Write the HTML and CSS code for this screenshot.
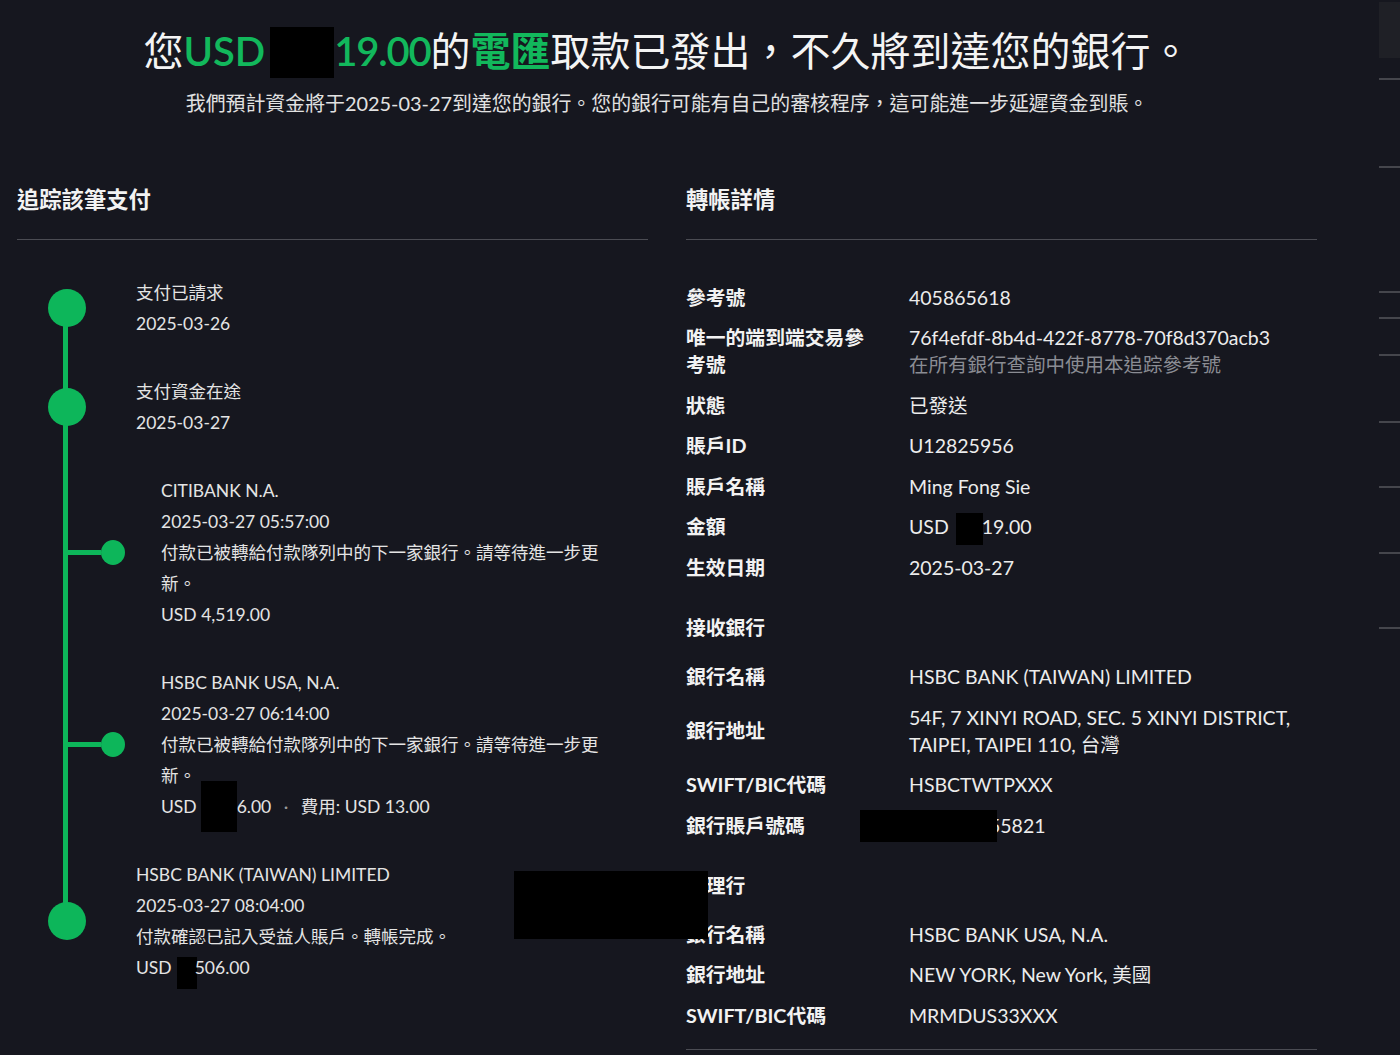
FILE: index.html
```html
<!DOCTYPE html>
<html lang="zh-Hant-TW">
<head>
  <meta charset="UTF-8" />
  <meta name="viewport" content="width=device-width, initial-scale=1.0">
  <title>電匯取款已發出</title>
  <link rel="stylesheet" href="styles.css">
</head>
<body>

  <div class="page">
    <!-- Summary -->
    <div class="hero">
      <h1>您<span class="green">USD<span class="mask mask-hero"></span><span class="num">19.00</span></span>的<span class="green strong">電匯</span>取款已發出，不久將到達您的銀行。</h1>
      <p>我們預計資金將于2025-03-27到達您的銀行。您的銀行可能有自己的審核程序，這可能進一步延遲資金到賬。</p>
    </div>

    <div class="columns">
      <!-- Tracking timeline -->
      <section class="panel">
        <h2>追踪該筆支付</h2>
        <div class="timeline">
          <div class="event">
            <div class="marker"><span class="dot"></span></div>
            <div class="event-text">
              <div>支付已請求</div>
              <div>2025-03-26</div>
            </div>
          </div>
          <div class="event">
            <div class="marker"><span class="dot"></span></div>
            <div class="event-text">
              <div>支付資金在途</div>
              <div>2025-03-27</div>
            </div>
          </div>
          <div class="event sub">
            <div class="marker"><span class="branch"></span><span class="dot small"></span></div>
            <div class="event-text">
              <div>CITIBANK N.A.</div>
              <div>2025-03-27 05:57:00</div>
              <div>付款已被轉給付款隊列中的下一家銀行。請等待進一步更新。</div>
              <div>USD 4,519.00</div>
            </div>
          </div>
          <div class="event sub">
            <div class="marker"><span class="branch"></span><span class="dot small"></span></div>
            <div class="event-text">
              <div>HSBC BANK USA, N.A.</div>
              <div>2025-03-27 06:14:00</div>
              <div>付款已被轉給付款隊列中的下一家銀行。請等待進一步更新。</div>
              <div>USD<span class="mask mask-fee"></span>6.00 <span class="sep">·</span> 費用: USD 13.00</div>
            </div>
          </div>
          <div class="event">
            <div class="marker"><span class="dot"></span></div>
            <div class="event-text">
              <div>HSBC BANK (TAIWAN) LIMITED</div>
              <div>2025-03-27 08:04:00</div>
              <div>付款確認已記入受益人賬戶。轉帳完成。</div>
              <div>USD<span class="mask mask-final"></span>506.00</div>
            </div>
          </div>
        </div>
      </section>

      <!-- Transfer details -->
      <section class="panel">
        <h2>轉帳詳情</h2>
        <div class="details">
          <div class="row"><div class="label">參考號</div><div class="value">405865618</div></div>
          <div class="row">
            <div class="label">唯一的端到端交易參考號</div>
            <div class="value">76f4efdf-8b4d-422f-8778-70f8d370acb3<div class="hint">在所有銀行查詢中使用本追踪參考號</div></div>
          </div>
          <div class="row"><div class="label">狀態</div><div class="value">已發送</div></div>
          <div class="row"><div class="label">賬戶ID</div><div class="value">U12825956</div></div>
          <div class="row"><div class="label">賬戶名稱</div><div class="value">Ming Fong Sie</div></div>
          <div class="row"><div class="label">金額</div><div class="value">USD<span class="mask mask-amount"></span>19.00</div></div>
          <div class="row"><div class="label">生效日期</div><div class="value">2025-03-27</div></div>

          <div class="group">接收銀行</div>
          <div class="row"><div class="label">銀行名稱</div><div class="value">HSBC BANK (TAIWAN) LIMITED</div></div>
          <div class="row"><div class="label">銀行地址</div><div class="value">54F, 7 XINYI ROAD, SEC. 5 XINYI DISTRICT,<br>TAIPEI, TAIPEI 110, 台灣</div></div>
          <div class="row"><div class="label">SWIFT/BIC代碼</div><div class="value">HSBCTWTPXXX</div></div>
          <div class="row"><div class="label">銀行賬戶號碼</div><div class="value"><span class="mask mask-account"></span>55821</div></div>

          <div class="group">代理行</div>
          <div class="row"><div class="label">銀行名稱</div><div class="value">HSBC BANK USA, N.A.</div></div>
          <div class="row"><div class="label">銀行地址</div><div class="value">NEW YORK, New York, 美國</div></div>
          <div class="row"><div class="label">SWIFT/BIC代碼</div><div class="value">MRMDUS33XXX</div></div>
        </div>
      </section>
    </div>

    <!-- redaction over both columns -->
    <div class="mask mask-block"></div>
  </div>

  <!-- edge of the next panel -->
  <div class="edge">
    <div class="edge-box"></div>
    <i></i><i></i><i></i><i></i><i></i><i></i><i></i><i></i><i></i>
  </div>

</body>
</html>
```

FILE: styles.css
```css
/* General reset */
html, body {
  margin: 0;
  padding: 0;
  background: #16171f;
  color: #ececec;
  font-family: "Lato", "Noto Sans CJK TC", sans-serif;
  overflow: hidden;
}

body {
  display: flex;
  width: 1400px;
  height: 1055px;
}

.page {
  position: relative;
  flex: 0 0 1379px;
  box-sizing: border-box;
  padding: 25px 62px 0 17px;
}

/* Summary */
.hero {
  text-align: center;
}

.hero h1 {
  margin: 0;
  height: 52px;
  font-size: 40px;
  line-height: 52px;
  font-weight: 400;
  color: #f4f4f4;
}

.green {
  color: #12b85c;
  font-weight: 600;
}

.green.strong {
  font-weight: 700;
}

.num {
  letter-spacing: -1.2px;
}

.hero p {
  margin: 12px 0 0;
  height: 28px;
  font-size: 19.9px;
  line-height: 28px;
  color: #e2e2e2;
}

/* Redactions - bottom margin pulls the box below the baseline without growing the line */
.mask {
  display: inline-block;
  background: #000;
  vertical-align: baseline;
}

.mask-hero {
  width: 64px;
  height: 51px;
  margin: 0 0 -12px 5px;
}

.mask-fee {
  width: 36px;
  height: 51px;
  margin: -11px 0 -19px 4px;
}

.mask-final {
  width: 20px;
  height: 32px;
  margin: 0 -2px -15px 5px;
}

.mask-amount {
  width: 27px;
  height: 32px;
  margin: 0 -1px -11px 7px;
}

.mask-account {
  width: 137px;
  height: 32px;
  margin: -2px -8px -9px -49px;
  position: relative;
  z-index: 1;
}

.mask-block {
  position: absolute;
  left: 514px;
  top: 871px;
  width: 194px;
  height: 68px;
  z-index: 2;
}

/* Columns */
.columns {
  display: grid;
  grid-template-columns: 631px 631px;
  column-gap: 38px;
  margin-top: 68px;
}

.panel h2 {
  margin: 0;
  height: 30px;
  padding-bottom: 24px;
  border-bottom: 1px solid #4b4c53;
  font-size: 22.3px;
  line-height: 30px;
  font-weight: 700;
  color: #f2f2f2;
}

/* Timeline */
.timeline {
  padding-top: 37px;
  display: flex;
  flex-direction: column;
  gap: 37px;
  background: linear-gradient(#0db65a, #0db65a) no-repeat;
  background-position: 46px 68px;
  background-size: 5px calc(100% - 130px);
}

.event {
  display: flex;
  align-items: center;
}

.marker {
  flex: 0 0 119px;
  display: flex;
  align-items: center;
}

.dot {
  width: 38px;
  height: 38px;
  margin-left: 31px;
  border-radius: 50%;
  background: #0db65a;
}

.sub .marker {
  flex-basis: 144px;
}

.branch {
  width: 38px;
  height: 5px;
  margin-left: 46px;
  background: #0db65a;
}

.dot.small {
  width: 24px;
  height: 25px;
  margin-left: 0;
}

.event-text {
  max-width: 445px;
  font-size: 17.5px;
  line-height: 31px;
  color: #e4e4e4;
}

.sep {
  margin: 0 8px;
  color: #9a9a9a;
}

/* Details */
.details {
  display: flex;
  flex-direction: column;
  gap: 13.6px;
  padding: 43.5px 0 20.5px;
  border-bottom: 1px solid #4b4c53;
}

.row {
  display: grid;
  grid-template-columns: 190px 1fr;
  column-gap: 33px;
  align-items: center;
  line-height: 27px;
  font-size: 19.5px;
}

.label {
  font-size: 19.8px;
  font-weight: 700;
  color: #f2f2f2;
}

.value {
  color: #ececec;
}

.hint {
  color: #8a8c93;
}

.group {
  margin: 19.4px 0 8.4px;
  font-size: 19.8px;
  line-height: 27px;
  font-weight: 700;
  color: #f2f2f2;
}

/* Edge of next panel */
.edge {
  flex: 0 0 21px;
  display: flex;
  flex-direction: column;
  padding-top: 2px;
}

.edge-box {
  height: 56px;
  background: #1f2026;
}

.edge i {
  display: block;
  border-bottom: 2px solid #45464c;
}

.edge i:nth-child(2) { height: 20px; }
.edge i:nth-child(3) { height: 86px; }
.edge i:nth-child(4) { height: 123px; }
.edge i:nth-child(5) { height: 24px; }
.edge i:nth-child(6) { height: 35px; }
.edge i:nth-child(7) { height: 65px; }
.edge i:nth-child(8) { height: 63px; }
.edge i:nth-child(9) { height: 64px; }
.edge i:nth-child(10) { height: 73px; }
```
